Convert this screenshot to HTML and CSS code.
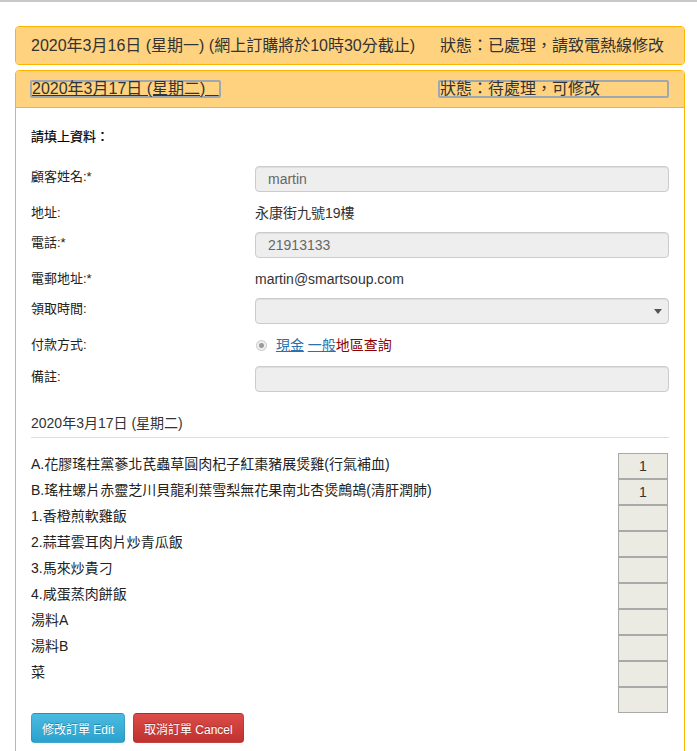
FILE: index.html
```html
<!DOCTYPE html>
<html>
<head>
  <meta charset="utf-8">
  <meta name="viewport" content="width=device-width, initial-scale=1.0">
  <title>網上訂購</title>
  <link rel="stylesheet" href="styles.css">
</head>
<body>
  <div class="topline"></div>

  <div class="page">
    <div class="panel">
      <div class="panel-heading">
        <span class="day">2020年3月16日 (星期一) (網上訂購將於10時30分截止)</span>
        <span class="status">狀態：已處理，請致電熱線修改</span>
      </div>
    </div>

    <div class="panel">
      <div class="panel-heading">
        <a class="day day-link" href="#">2020年3月17日 (星期二)&nbsp;&nbsp;&nbsp;</a>
        <span class="status status-box">狀態：待處理，可修改</span>
      </div>

      <div class="panel-body">
        <p class="intro">請填上資料：</p>

        <div class="form-row">
          <label>顧客姓名:*</label>
          <div class="field">martin</div>
        </div>
        <div class="form-row static">
          <label>地址:</label>
          <div class="value">永康街九號19樓</div>
        </div>
        <div class="form-row">
          <label>電話:*</label>
          <div class="field">21913133</div>
        </div>
        <div class="form-row static">
          <label>電郵地址:*</label>
          <div class="value">martin@smartsoup.com</div>
        </div>
        <div class="form-row">
          <label>領取時間:</label>
          <div class="field select-field"></div>
        </div>
        <div class="form-row static radio-row">
          <label>付款方式:</label>
          <div class="value">
            <span class="radio"></span>
            <a href="#">現金</a> <a href="#">一般</a><span class="area">地區查詢</span>
          </div>
        </div>
        <div class="form-row">
          <label>備註:</label>
          <div class="field"></div>
        </div>

        <div class="section-date">2020年3月17日 (星期二)</div>
        <div class="divider"></div>

        <div class="items">
          <div class="item"><span class="item-name">A.花膠瑤柱黨蔘北芪蟲草圓肉杞子紅棗豬展煲雞(行氣補血)</span><span class="qty">1</span></div>
          <div class="item"><span class="item-name">B.瑤柱螺片赤靈芝川貝龍利葉雪梨無花果南北杏煲鷓鴣(清肝潤肺)</span><span class="qty">1</span></div>
          <div class="item"><span class="item-name">1.香橙煎軟雞飯</span><span class="qty"></span></div>
          <div class="item"><span class="item-name">2.蒜茸雲耳肉片炒青瓜飯</span><span class="qty"></span></div>
          <div class="item"><span class="item-name">3.馬來炒貴刁</span><span class="qty"></span></div>
          <div class="item"><span class="item-name">4.咸蛋蒸肉餅飯</span><span class="qty"></span></div>
          <div class="item"><span class="item-name">湯料A</span><span class="qty"></span></div>
          <div class="item"><span class="item-name">湯料B</span><span class="qty"></span></div>
          <div class="item"><span class="item-name">菜</span><span class="qty"></span></div>
          <div class="item"><span class="item-name"></span><span class="qty"></span></div>
        </div>

        <div class="actions">
          <button class="btn btn-edit">修改訂單 Edit</button>
          <button class="btn btn-cancel">取消訂單 Cancel</button>
        </div>
      </div>
    </div>
  </div>
</body>
</html>
```

FILE: styles.css
```css
* {
  box-sizing: border-box;
}

body {
  margin: 0;
  font-family: "Liberation Sans", "Noto Sans CJK TC", sans-serif;
  font-size: 13px;
  color: #333;
  background-color: #fff;
}

.topline {
  height: 2px;
  background-color: #c9c9c9;
}

.page {
  padding: 24px 12px 0 15px;
}

.panel {
  border: 1px solid #ffb400;
  border-radius: 4px;
  margin-bottom: 5px;
}

.panel-heading {
  display: grid;
  grid-template-columns: 409px 1fr;
  align-items: center;
  padding: 9px 15px;
  font-size: 16px;
  line-height: 19px;
  background-color: #ffd27f;
  border-radius: 3px;
}

.panel .panel-heading:not(:last-child) {
  border-bottom: 1px solid #ffb400;
  border-radius: 3px 3px 0 0;
}

.day,
.status {
  white-space: nowrap;
}

.day-link {
  justify-self: start;
  margin-left: -1px;
  color: #333;
  line-height: 14px;
  border: 2px solid #9ea8b5;
  border-radius: 2px;
}

.status-box {
  justify-self: start;
  width: 231px;
  margin-left: -2px;
  line-height: 14px;
  border: 2px solid #9ea8b5;
  border-radius: 2px;
}

.panel-body {
  padding: 20px 15px 40px 15px;
}

.intro {
  margin: 0 0 20px 0;
  line-height: 18px;
  color: #000;
  -webkit-text-stroke: 0.2px #000;
}

.form-row {
  display: grid;
  grid-template-columns: 224px 1fr;
  min-height: 26px;
  margin-bottom: 7px;
}

.form-row label {
  padding-top: 2px;
  line-height: 18px;
  color: #222;
}

.form-row.static label,
.form-row .value {
  padding-top: 5px;
}

.form-row .value {
  font-size: 14px;
  line-height: 18px;
  color: #333;
}

.radio-row {
  min-height: 28px;
}

.field {
  position: relative;
  height: 26px;
  padding: 0 12px;
  font-size: 14px;
  line-height: 24px;
  color: #666;
  background-color: #eee;
  border: 1px solid #ccc;
  border-radius: 4px;
  box-shadow: inset 0 1px 1px rgba(0, 0, 0, 0.075);
}

.select-field::after {
  content: "";
  position: absolute;
  right: 6px;
  top: 10px;
  border-left: 4px solid transparent;
  border-right: 4px solid transparent;
  border-top: 5px solid #555;
}

.radio {
  display: inline-block;
  width: 11px;
  height: 11px;
  margin: 0 5px 0 1px;
  vertical-align: -1px;
  border: 1px solid #c8c8c8;
  border-radius: 50%;
  background: radial-gradient(circle, #9a9a9a 0, #9a9a9a 2px, #eee 3px);
}

.value a {
  color: #2f6fae;
  text-decoration: underline;
}

.area {
  color: #8b0000;
}

.section-date {
  margin-top: 21px;
  font-size: 14px;
  line-height: 20px;
}

.divider {
  margin: 4px 0 15px 0;
  border-top: 1px solid #ddd;
}

.item {
  display: flex;
  justify-content: space-between;
  height: 26px;
  font-size: 14px;
  color: #222;
}

.item-name {
  line-height: 22px;
  white-space: nowrap;
}

.qty {
  width: 50px;
  height: 26px;
  margin-right: 1px;
  text-align: center;
  line-height: 24px;
  color: #333;
  background-color: #ebebe4;
  border: 1px solid #a9a9a9;
}

.actions {
  display: flex;
  gap: 8px;
}

.btn {
  height: 30px;
  padding: 0 10px;
  font-family: "Liberation Sans", "Noto Sans CJK TC", sans-serif;
  font-size: 12px;
  color: #fff;
  border: 1px solid rgba(0, 0, 0, 0.1);
  border-radius: 4px;
  text-shadow: 0 -1px 0 rgba(0, 0, 0, 0.25);
  cursor: pointer;
}

.btn-edit {
  background: linear-gradient(#4bbbe0, #2aa2cf);
}

.btn-cancel {
  background: linear-gradient(#dc4c48, #c0322f);
}
```
